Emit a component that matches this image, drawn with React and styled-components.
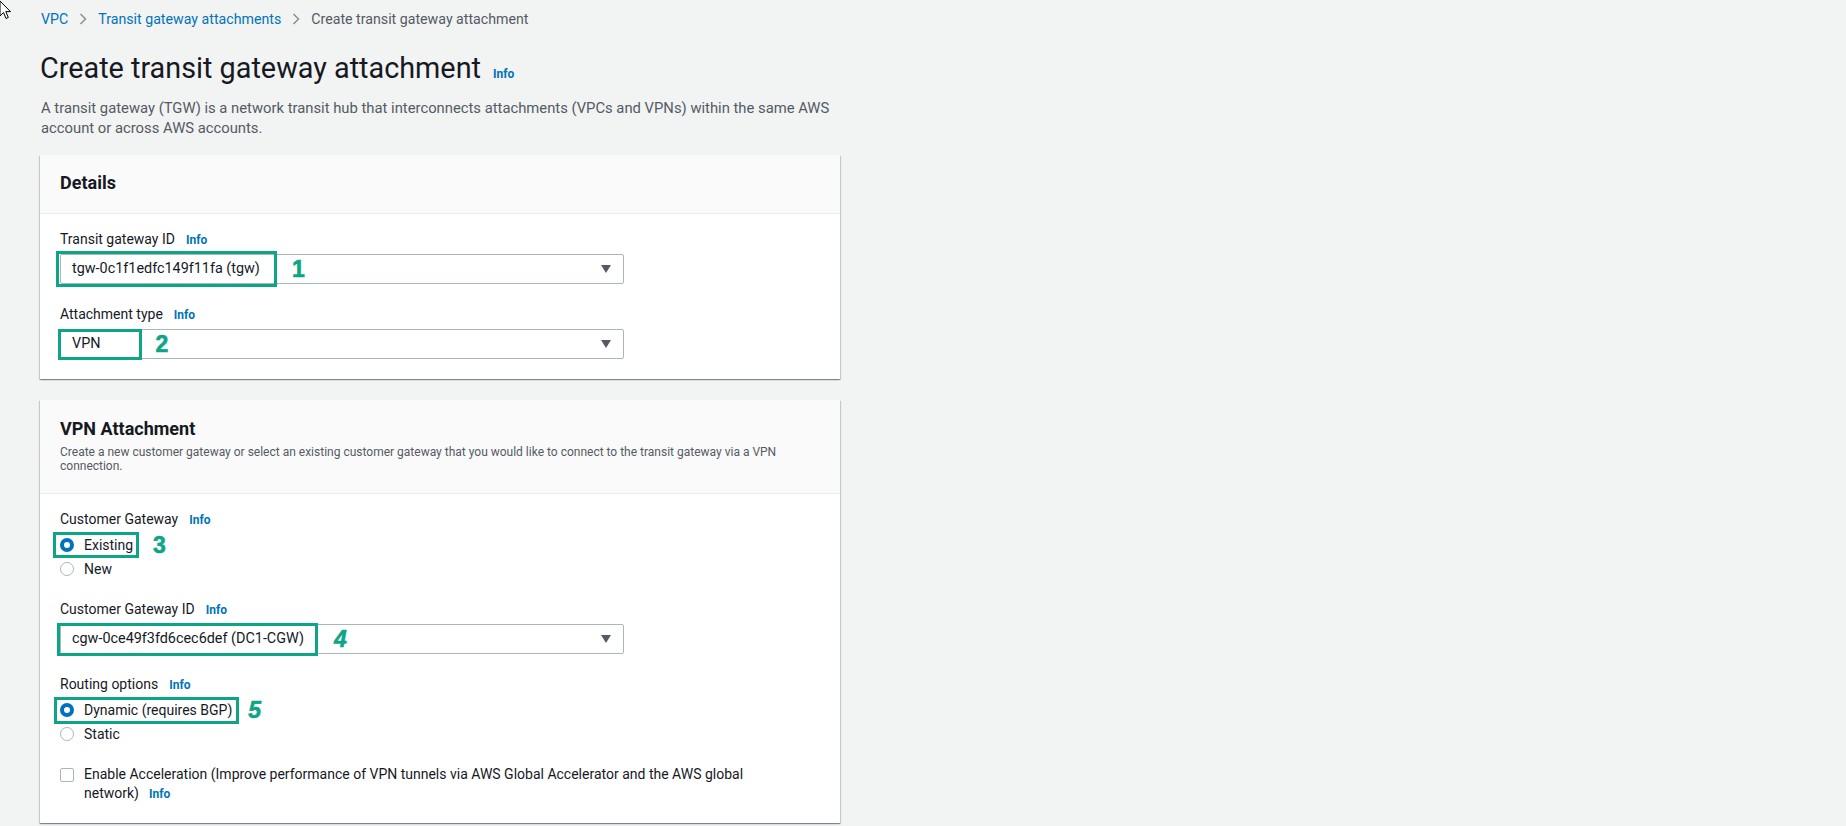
import React from 'react';
import styled, { createGlobalStyle } from 'styled-components';

const GlobalStyle = createGlobalStyle`
  html, body {
    margin: 0;
    padding: 0;
    background: #f2f3f3;
  }
  body {
    font-family: Roboto, 'Noto Sans', sans-serif;
    color: #16191f;
  }
`;

const teal = '#0ea586';

const Page = styled.div`
  position: relative;
  min-height: 826px;
  padding: 8px 40px 0;
  box-sizing: border-box;
`;

const Cursor = styled.svg`
  position: absolute;
  top: 0;
  left: -2px;
`;

const Breadcrumbs = styled.nav`
  display: flex;
  align-items: center;
  height: 22px;
  font-size: 14.2px;
  padding-left: 1px;
`;

const Crumb = styled.span`
  color: ${(p) => (p.$current ? '#545b64' : '#0073bb')};
`;

const Chevron = styled.svg`
  margin: 0 11px;
  display: block;
`;

const TitleRow = styled.div`
  display: flex;
  align-items: baseline;
  margin-top: 20px;
`;

const Title = styled.h1`
  margin: 0;
  font-size: 28.8px;
  line-height: 36px;
  font-weight: 400;
  color: #16191f;
`;

const Info = styled.span`
  font-size: 12px;
  line-height: 16px;
  font-weight: 700;
  color: #0073bb;
  margin-left: ${(p) => p.$gap || 10}px;
`;

const Intro = styled.p`
  margin: 12px 0 0;
  max-width: 800px;
  font-size: 14.8px;
  line-height: 20px;
  color: #545b64;
  padding-left: 1px;
`;

const Card = styled.section`
  width: 800px;
  margin-top: ${(p) => p.$top}px;
  background: #fff;
  box-shadow: 0 1px 1px 0 rgba(0, 28, 36, 0.3), 1px 1px 1px 0 rgba(0, 28, 36, 0.15),
    -1px 1px 1px 0 rgba(0, 28, 36, 0.15);
`;

const CardHeader = styled.header`
  background: #fafafa;
  border-bottom: 1px solid #eaeded;
  padding: ${(p) => p.$pt}px 20px ${(p) => p.$pb}px;
`;

const CardTitle = styled.h2`
  margin: 0;
  font-size: 18px;
  line-height: 22px;
  font-weight: 700;
`;

const CardDescription = styled.p`
  margin: 5px 0 0;
  font-size: 12px;
  line-height: 14px;
  color: #545b64;
  max-width: 750px;
`;

const CardBody = styled.div`
  padding: 15px 20px ${(p) => p.$pb}px;
`;

const Field = styled.div`
  margin-top: ${(p) => p.$top || 0}px;
`;

const FieldLabel = styled.div`
  display: flex;
  align-items: baseline;
  height: 20px;
  font-size: 14px;
  line-height: 20px;
  color: #16191f;
`;

const Select = styled.div`
  display: flex;
  align-items: center;
  width: 564px;
  height: 30px;
  margin-top: 5px;
  border: 1px solid #aab7b8;
  border-radius: 2px;
  box-sizing: border-box;
  background: #fff;
  font-size: 14.4px;
  line-height: 20px;
`;

const Caret = styled.svg`
  margin-left: auto;
  margin-right: 12px;
  display: block;
`;

const RadioGroup = styled.div`
  display: flex;
  flex-direction: column;
  margin-top: 4px;
`;

const RadioRow = styled.label`
  display: flex;
  align-items: center;
  height: 24px;
`;

const Option = styled.span`
  display: inline-flex;
  align-items: center;
  gap: 10px;
  font-size: 14px;
  line-height: 20px;
`;

const RadioDot = styled.span`
  width: 14px;
  height: 14px;
  border-radius: 50%;
  box-sizing: border-box;
  flex: none;
  background: #fff;
  border: ${(p) => (p.$checked ? '4px solid #0073bb' : '1px solid #aab7b8')};
`;

const CheckRow = styled.label`
  display: flex;
  align-items: flex-start;
  gap: 10px;
  margin-top: 19px;
  font-size: 14px;
  line-height: 19px;
`;

const CheckBox = styled.span`
  width: 14px;
  height: 14px;
  margin-top: 3px;
  flex: none;
  box-sizing: border-box;
  border: 1px solid #aab7b8;
  border-radius: 2px;
  background: #fff;
`;

const CheckText = styled.span`
  max-width: 690px;
`;

/* green callout box drawn around a value, plus its step number */
const Mark = styled.span`
  display: inline-flex;
  align-items: center;
  flex: none;
  box-sizing: border-box;
  height: ${(p) => p.$h}px;
  margin-left: ${(p) => p.$ml}px;
  padding: 0 ${(p) => p.$pr}px 0 ${(p) => p.$pl}px;
  border: 3px solid ${teal};
  white-space: nowrap;
`;

const Step = styled.span`
  margin-left: ${(p) => p.$gap}px;
  font-family: 'Liberation Sans', Arial, sans-serif;
  font-size: 23px;
  font-weight: 700;
  line-height: 20px;
  color: ${teal};
  -webkit-text-stroke: 0.6px ${teal};
  font-style: ${(p) => (p.$slant ? 'italic' : 'normal')};
`;

const ChevronIcon = () => (
  <Chevron width="8" height="12" viewBox="0 0 8 12">
    <polyline points="1.5,1 6.5,6 1.5,11" fill="none" stroke="#879596" strokeWidth="1.6" />
  </Chevron>
);

const CaretIcon = () => (
  <Caret width="10" height="8" viewBox="0 0 10 8">
    <polygon points="0,0 10,0 5,8" fill="#545b64" />
  </Caret>
);

const Label = ({ children }) => (
  <FieldLabel>
    {children}
    <Info $gap={11}>Info</Info>
  </FieldLabel>
);

export default function App() {
  return (
    <>
      <GlobalStyle />
      <Page>
        <Cursor width="14" height="20" viewBox="0 0 14 20">
          <path d="M2 1 L2 16 L5.5 12.5 L8 18.5 L10.3 17.5 L7.8 11.6 L12.5 11.6 Z" fill="#fff" stroke="#000" strokeWidth="1" />
        </Cursor>

        <Breadcrumbs>
          <Crumb>VPC</Crumb>
          <ChevronIcon />
          <Crumb>Transit gateway attachments</Crumb>
          <ChevronIcon />
          <Crumb $current>Create transit gateway attachment</Crumb>
        </Breadcrumbs>

        <TitleRow>
          <Title>Create transit gateway attachment</Title>
          <Info $gap={12}>Info</Info>
        </TitleRow>
        <Intro>
          A transit gateway (TGW) is a network transit hub that interconnects attachments (VPCs and VPNs) within the same AWS
          account or across AWS accounts.
        </Intro>

        <Card $top={17}>
          <CardHeader $pt={17} $pb={19}>
            <CardTitle>Details</CardTitle>
          </CardHeader>
          <CardBody $pb={20}>
            <Field>
              <Label>Transit gateway ID</Label>
              <Select>
                <Mark $h={36} $ml={-5} $pl={13} $pr={14}>tgw-0c1f1edfc149f11fa (tgw)</Mark>
                <Step $gap={15}>1</Step>
                <CaretIcon />
              </Select>
            </Field>
            <Field $top={20}>
              <Label>Attachment type</Label>
              <Select>
                <Mark $h={31} $ml={-3} $pl={11} $pr={38}>VPN</Mark>
                <Step $gap={14}>2</Step>
                <CaretIcon />
              </Select>
            </Field>
          </CardBody>
        </Card>

        <Card $top={21}>
          <CardHeader $pt={18} $pb={20}>
            <CardTitle>VPN Attachment</CardTitle>
            <CardDescription>
              Create a new customer gateway or select an existing customer gateway that you would like to connect to the transit
              gateway via a VPN connection.
            </CardDescription>
          </CardHeader>
          <CardBody $pb={20}>
            <Field>
              <Label>Customer Gateway</Label>
              <RadioGroup>
                <RadioRow>
                  <Mark $h={26} $ml={-7} $pl={4} $pr={3}>
                    <Option>
                      <RadioDot $checked />
                      Existing
                    </Option>
                  </Mark>
                  <Step $gap={14}>3</Step>
                </RadioRow>
                <RadioRow>
                  <Option>
                    <RadioDot />
                    New
                  </Option>
                </RadioRow>
              </RadioGroup>
            </Field>
            <Field $top={18}>
              <Label>Customer Gateway ID</Label>
              <Select>
                <Mark $h={33} $ml={-4} $pl={12} $pr={11}>cgw-0ce49f3fd6cec6def (DC1-CGW)</Mark>
                <Step $gap={16} $slant>4</Step>
                <CaretIcon />
              </Select>
            </Field>
            <Field $top={20}>
              <Label>Routing options</Label>
              <RadioGroup>
                <RadioRow>
                  <Mark $h={27} $ml={-6} $pl={3} $pr={4}>
                    <Option>
                      <RadioDot $checked />
                      Dynamic (requires BGP)
                    </Option>
                  </Mark>
                  <Step $gap={9} $slant>5</Step>
                </RadioRow>
                <RadioRow>
                  <Option>
                    <RadioDot />
                    Static
                  </Option>
                </RadioRow>
              </RadioGroup>
            </Field>
            <CheckRow>
              <CheckBox />
              <CheckText>
                Enable Acceleration (Improve performance of VPN tunnels via AWS Global Accelerator and the AWS global network)
                <Info $gap={10}>Info</Info>
              </CheckText>
            </CheckRow>
          </CardBody>
        </Card>
      </Page>
    </>
  );
}
